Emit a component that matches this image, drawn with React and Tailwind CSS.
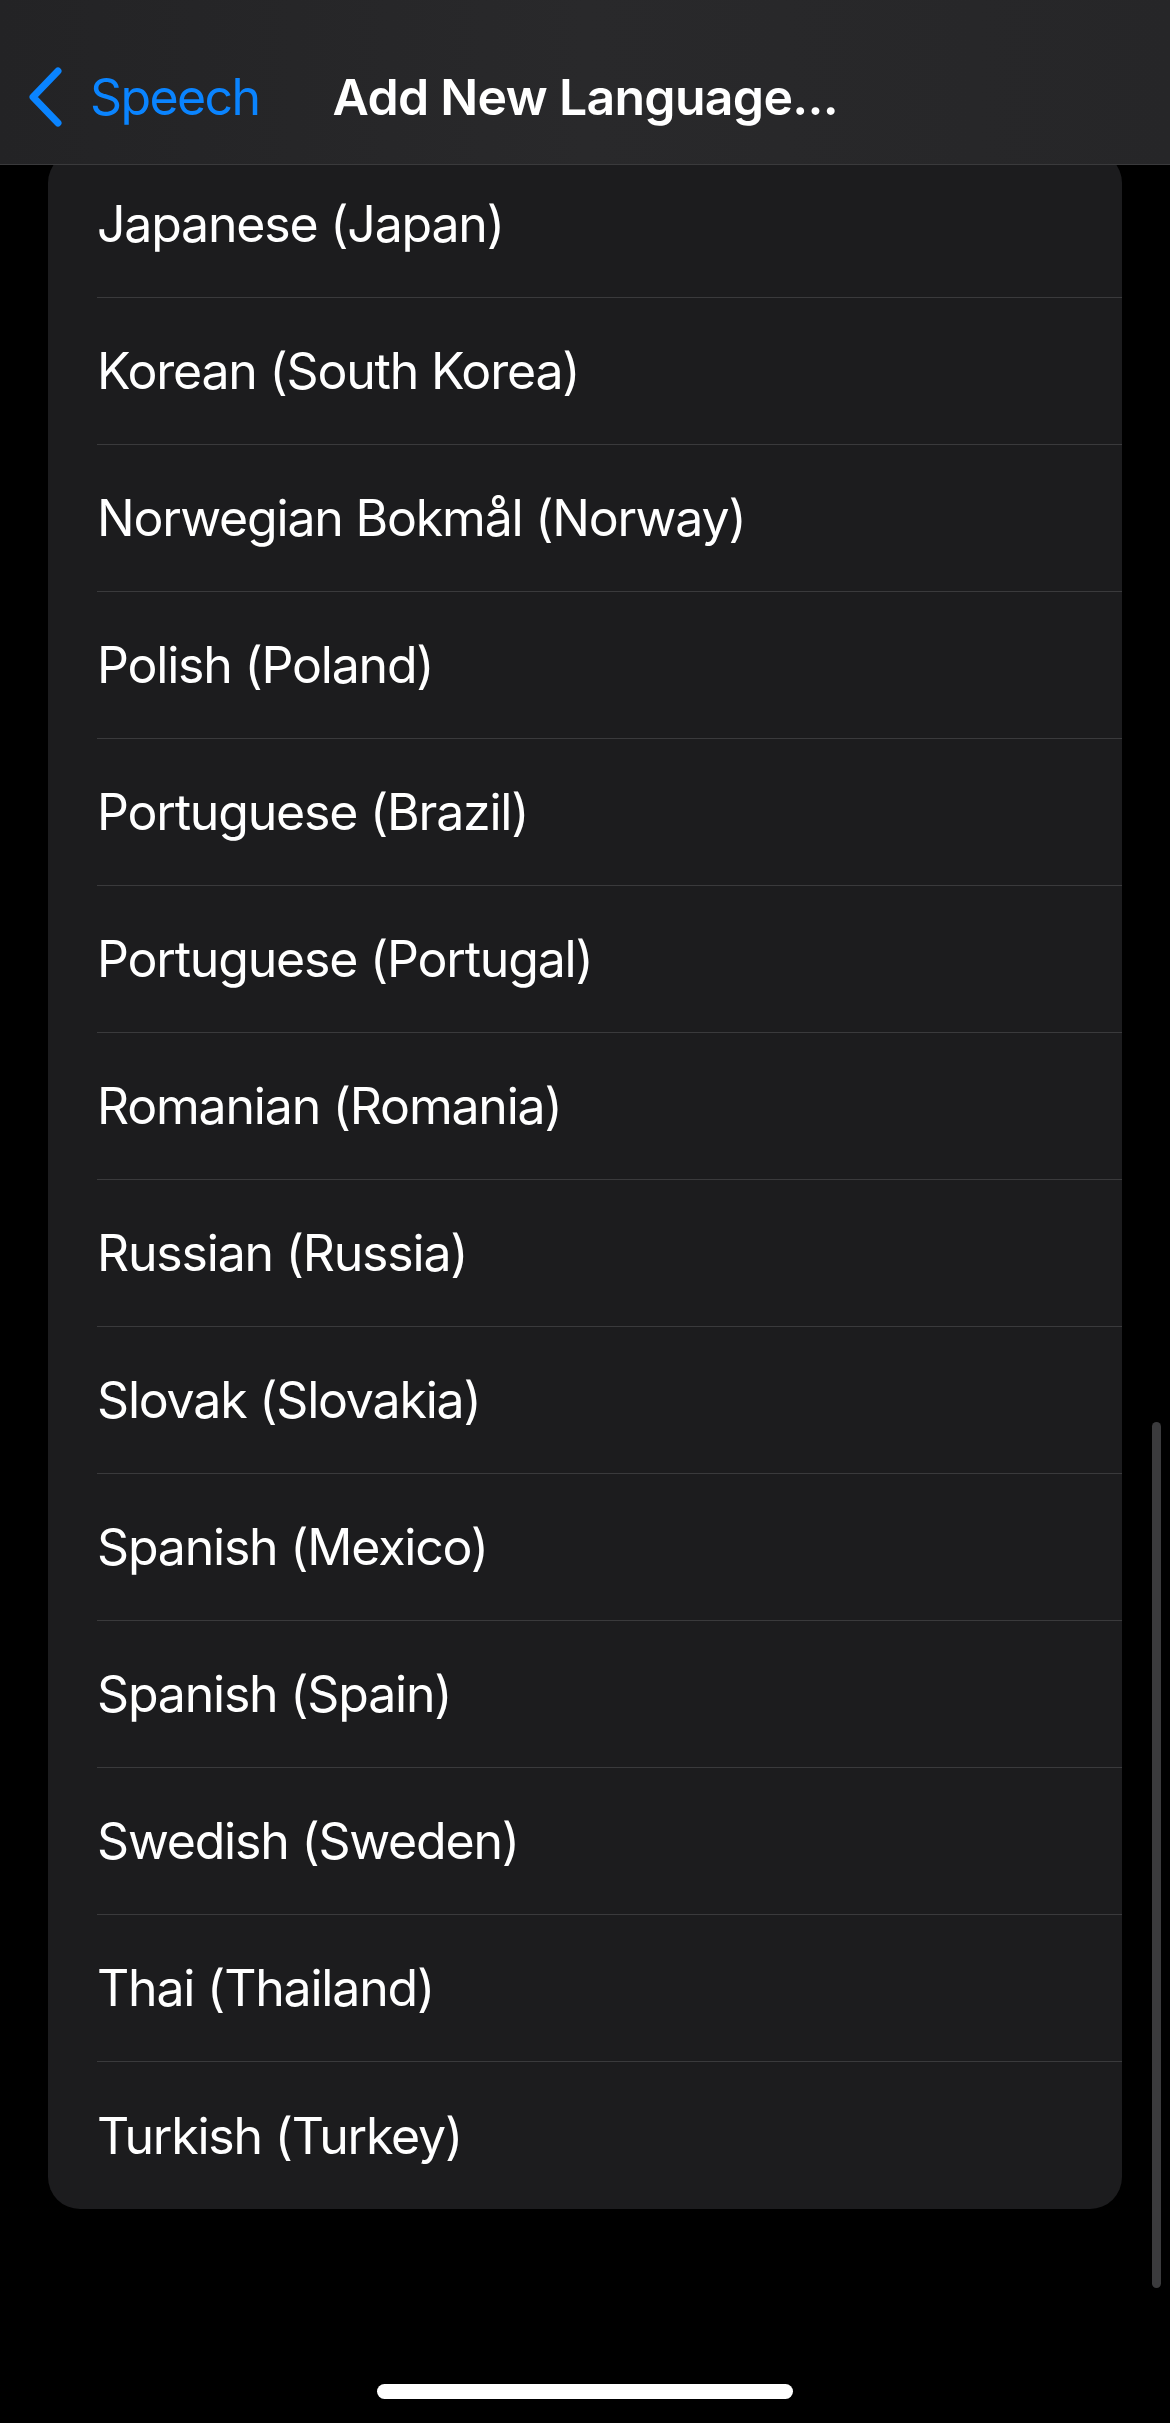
const languages = [
  'Japanese (Japan)',
  'Korean (South Korea)',
  'Norwegian Bokmål (Norway)',
  'Polish (Poland)',
  'Portuguese (Brazil)',
  'Portuguese (Portugal)',
  'Romanian (Romania)',
  'Russian (Russia)',
  'Slovak (Slovakia)',
  'Spanish (Mexico)',
  'Spanish (Spain)',
  'Swedish (Sweden)',
  'Thai (Thailand)',
  'Turkish (Turkey)',
]

const font = { fontFamily: 'Inter, "Noto Sans", sans-serif' }

export default function App() {
  return (
    <div
      className="relative w-[1170px] h-[2423px] bg-black overflow-hidden font-['Inter','Noto_Sans',sans-serif]"
      style={font}
    >
      {/* nav bar sits over the scrolled list */}
      <div className="absolute top-0 left-0 right-0 z-10 h-[165px] bg-gradient-to-r from-[#232325] via-[#29292b] to-[#262628] border-b border-[#3a3a3c] flex items-center pt-[30px]">
        <div className="flex items-center pl-[26px]">
          <svg width="38" height="60" viewBox="0 0 38 60" className="mr-[26px]">
            <path
              d="M32 4 L7 30 L32 56"
              fill="none"
              stroke="#0a84ff"
              strokeWidth="7"
              strokeLinecap="round"
              strokeLinejoin="round"
            />
          </svg>
          <span className="text-[#0a84ff] text-[50px] leading-none tracking-[-1.6px]">Speech</span>
        </div>
        <span className="ml-[73px] text-white text-[50px] leading-none font-semibold tracking-[-0.7px]">
          Add New Language...
        </span>
      </div>

      {/* list, scrolled so the first row is partly under the nav bar */}
      <div className="pt-[151px] px-[48px]">
        <div className="bg-[#1c1c1e] rounded-[32px]">
          {languages.map((name, i) => (
            <div key={name} className="pl-[49px]">
              <div
                className={
                  'h-[147px] flex items-center ' +
                  (i < languages.length - 1 ? 'border-b border-[#3a3a3c]' : '')
                }
              >
                <span className="text-white text-[50px] tracking-[-1.2px] leading-none">{name}</span>
              </div>
            </div>
          ))}
        </div>
      </div>

      {/* scroll indicator */}
      <div className="absolute left-[1152px] top-[1422px] w-[9px] h-[866px] rounded-full bg-[#3b3b3d]" />

      {/* home indicator */}
      <div className="absolute left-[377px] top-[2384px] w-[416px] h-[15px] rounded-full bg-white" />
    </div>
  )
}
